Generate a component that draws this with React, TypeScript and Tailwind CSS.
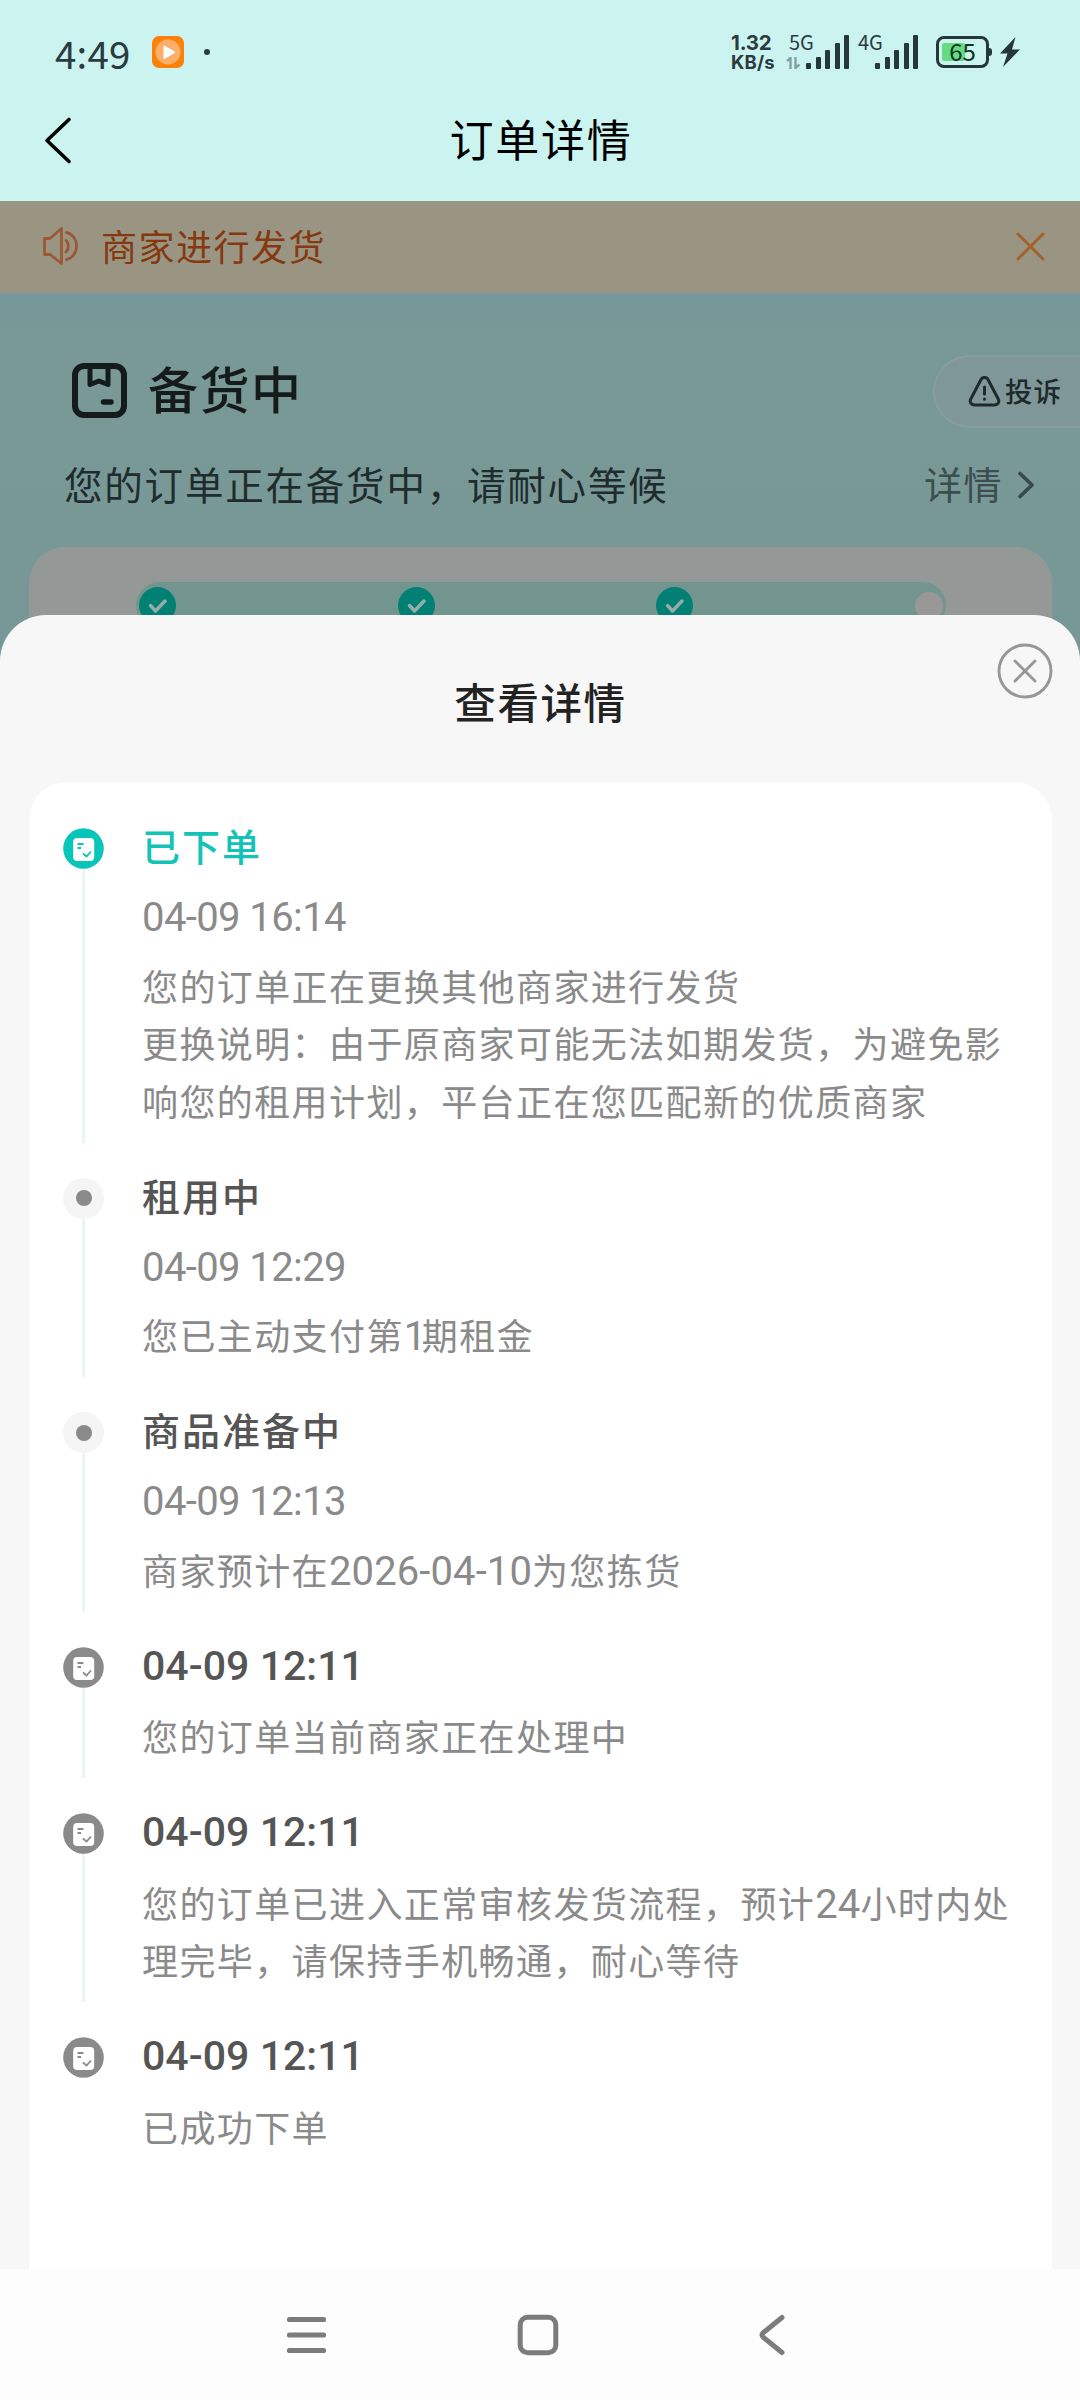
import type { ReactNode } from 'react';

type NodeKind = 'active' | 'dot' | 'done';

interface TimelineEntry {
  kind: NodeKind;
  title: string;
  time?: string;
  lines: string[];
}

const entries: TimelineEntry[] = [
  {
    kind: 'active',
    title: '已下单',
    time: '04-09 16:14',
    lines: [
      '您的订单正在更换其他商家进行发货',
      '更换说明：由于原商家可能无法如期发货，为避免影',
      '响您的租用计划，平台正在您匹配新的优质商家',
    ],
  },
  { kind: 'dot', title: '租用中', time: '04-09 12:29', lines: ['您已主动支付第1期租金'] },
  { kind: 'dot', title: '商品准备中', time: '04-09 12:13', lines: ['商家预计在2026-04-10为您拣货'] },
  { kind: 'done', title: '04-09 12:11', lines: ['您的订单当前商家正在处理中'] },
  {
    kind: 'done',
    title: '04-09 12:11',
    lines: ['您的订单已进入正常审核发货流程，预计24小时内处', '理完毕，请保持手机畅通，耐心等待'],
  },
  { kind: 'done', title: '04-09 12:11', lines: ['已成功下单'] },
];

function SignalBars() {
  return (
    <div className="flex h-[34px] items-end gap-[4.7px]">
      <span className="h-1.5 w-[4.8px] rounded-[1px] bg-[#26373a]" />
      <span className="h-3 w-[4.8px] rounded-[1px] bg-[#26373a]" />
      <span className="h-[19px] w-[4.8px] rounded-[1px] bg-[#26373a]" />
      <span className="h-[26px] w-[4.8px] rounded-[1px] bg-[#26373a]" />
      <span className="h-[34px] w-[4.8px] rounded-[1px] bg-[#26373a]" />
    </div>
  );
}

function StatusBar() {
  return (
    <div className="flex h-[104px] items-center pr-[60px] pl-[55px] text-[#2b3b3f]">
      <span className="w-[97px] font-['Noto_Sans_CJK_SC',sans-serif] text-[38.500px] leading-none tracking-[0.200px]">4:49</span>
      <svg width="32" height="32" viewBox="0 0 32 32">
        <rect width="32" height="32" rx="7" fill="#fb8207" />
        <circle cx="16" cy="16" r="12.5" fill="#fdae6b" />
        <path d="M11.5 10.5v11.5a.8.8 0 0 0 1.2.7l10-5.8a.8.8 0 0 0 0-1.4l-10-5.7a.8.8 0 0 0-1.2.7z" fill="#fff" />
      </svg>
      <span className="ml-5 size-1.5 rounded-full bg-[#2b3b3f]" />

      <div className="ml-auto flex items-center">
        <div className="mr-[7px] w-[48px] font-['Inter',sans-serif] font-bold whitespace-nowrap">
          <div className="text-[20.500px] leading-[20px] tracking-[-0.200px]">1.32</div>
          <div className="text-[18.500px] leading-[19px] tracking-[0.200px]">KB/s</div>
        </div>
        <div className="relative mr-[8px] flex h-[34px] w-[63px] justify-end">
          <span className="absolute -top-[3px] left-[3px] font-['Noto_Sans_CJK_SC',sans-serif] text-[20px] leading-5">5G</span>
          <svg className="absolute bottom-0 left-0" width="15" height="12" viewBox="0 0 15 12" fill="none" stroke="#84a2a2" strokeWidth="2.4">
            <path d="M1 4l3.5-3v11M9.500 0v11l4-3.500" />
          </svg>
          <SignalBars />
        </div>
        <div className="relative mr-[18px] flex h-[34px] w-[61px] justify-end">
          <span className="absolute -top-[3px] left-px font-['Noto_Sans_CJK_SC',sans-serif] text-[20px] leading-5">4G</span>
          <SignalBars />
        </div>
        <div className="relative flex h-8 w-[53px] items-center justify-center rounded-[8px] border-[3.5px] border-[#26373a]">
          <span className="absolute top-[3.5px] left-[3px] h-[18px] w-[23px] rounded-[2px] bg-[#65dc83]" />
          <span className="absolute top-[9px] -right-[6px] h-2 w-[3px] rounded-r bg-[#26373a]" />
          <span className="relative -mt-0.5 font-['Noto_Sans_CJK_SC',sans-serif] text-[24px] leading-none text-[#143421]">65</span>
        </div>
        <svg className="ml-[11px]" width="20" height="30" viewBox="0 0 20 30">
          <path d="M15.500 0L0 16.500h7.500L3 30L20 12.500h-8z" fill="#26373a" />
        </svg>
      </div>
    </div>
  );
}

function NavHeader() {
  return (
    <div className="flex h-[97px] items-start px-[43px]">
      <svg className="mt-[12px]" width="30" height="49" viewBox="0 0 30 49" fill="none" stroke="#000" strokeWidth="3.6" strokeLinecap="round" strokeLinejoin="round">
        <path d="M26 3.500L4 24.500L26 45.500" />
      </svg>
      <h1 className="mr-[28px] flex-1 text-center text-[44px] leading-[68px] tracking-[1.8px] text-black">订单详情</h1>
    </div>
  );
}

function NoticeBar() {
  return (
    <div className="flex h-[92px] items-center bg-[#9a9583] pr-[35px] pb-0.5 pl-[42px]">
      <svg width="37" height="38" viewBox="0 0 37 38" fill="none" stroke="#9c5835" strokeWidth="2.8" strokeLinejoin="round" strokeLinecap="round">
        <path d="M2.500 11.500H8L19.500 1.500V36.500L8 27.500H2.500z" />
        <path d="M24 13.500c3 2.500 3 9 0 11.500M24.500 5.500c5.500 1 10 6.500 10 13.500s-4.500 12.500-10 13.500" />
      </svg>
      <span className="-mt-0.5 ml-[22px] text-[36px] leading-[50px] tracking-[1.5px] text-[#84390f]">商家进行发货</span>
      <svg className="ml-auto" width="29" height="29" viewBox="0 0 29 29" fill="none" stroke="#a2622c" strokeWidth="3" strokeLinecap="round">
        <path d="M2 2l25 25M27 2L2 27" />
      </svg>
    </div>
  );
}

function StepCheck() {
  return (
    <svg width="37" height="37" viewBox="0 0 37 37" fill="none">
      <circle cx="18.500" cy="18.500" r="18.500" fill="#028074" />
      <path d="M11.500 18.500l5 5.500L26 14" stroke="#93aeaa" strokeWidth="3.500" strokeLinecap="round" strokeLinejoin="round" />
    </svg>
  );
}

function OrderSummary() {
  return (
    <section className="h-[420px] overflow-hidden bg-[#779997] bg-linear-to-b from-[#76979b] via-[#789996] via-10% to-[#779896]">
      <div className="mt-[62px] flex h-[73px] items-center pl-[72px]">
        <svg className="-mt-[3px]" width="55" height="55" viewBox="0 0 55 55" fill="none" stroke="#151b1b" strokeLinejoin="round" strokeLinecap="round">
          <rect x="3" y="3" width="49" height="49" rx="9" strokeWidth="6" />
          <path d="M18 4v17.500l9-3.500l9 3.500V4" strokeWidth="5" />
          <path d="M31.500 39h7.500" strokeWidth="5.500" />
        </svg>
        <h2 className="-mt-[9px] ml-[21px] text-[50px] leading-[72px] font-medium tracking-[1.5px] text-[#151a1a]">备货中</h2>
        <button className="ml-auto flex h-[73px] w-[147px] shrink-0 items-center rounded-l-full border-2 border-r-0 border-[#869e9d] bg-[#80979a] pl-[33px] text-[#1e2a2b]">
          <svg className="shrink-0" width="33" height="31" viewBox="0 0 33 31" fill="none" stroke="currentColor" strokeWidth="3" strokeLinecap="round" strokeLinejoin="round">
            <path d="M13 3.500a4 4 0 0 1 7 0L30.500 23.500a4 4 0 0 1-3.500 5.500H6a4 4 0 0 1-3.500-5.500z" />
            <path d="M16.500 11v7M16.500 23v.200" />
          </svg>
          <span className="-mt-[3px] ml-1 text-[27.500px] leading-10 font-medium tracking-[1px] whitespace-nowrap">投诉</span>
        </button>
      </div>
      <div className="mt-[28px] flex h-[56px] items-center pr-[45px] pl-[64px]">
        <p className="-mt-0.5 text-[38.500px] leading-[56px] tracking-[1.800px] text-[#1f2b2c]">您的订单正在备货中，请耐心等候</p>
        <span className="-mt-0.5 ml-auto text-[38px] leading-[56px] tracking-[1.500px] text-[#3d4d4f]">详情</span>
        <svg className="mt-0.5 ml-[14px]" width="18" height="30" viewBox="0 0 18 30" fill="none" stroke="#3a494b" strokeWidth="3.800" strokeLinecap="round" strokeLinejoin="round">
          <path d="M3 3.500L15 15L3 26.500" />
        </svg>
      </div>
      <div className="mr-[28px] ml-[29px] mt-[35px] h-[200px] rounded-t-[36px] bg-[#949998] pt-[35px]">
        <div className="mr-[106px] ml-[107px] flex h-[47px] items-center justify-between rounded-full bg-[#73958f] pr-[3px] pl-[3px]">
          <StepCheck />
          <StepCheck />
          <StepCheck />
          <span className="size-7 rounded-full bg-[#999797]" />
        </div>
      </div>
    </section>
  );
}

function NodeIcon({ kind }: { kind: NodeKind }) {
  if (kind === 'dot') {
    return (
      <span className="flex size-[41px] items-center justify-center rounded-full bg-[#f5f5f5]">
        <span className="size-4 rounded-full bg-[#8a8a8a]" />
      </span>
    );
  }
  const color = kind === 'active' ? '#08c5b9' : '#8a8a8a';
  return (
    <svg width="41" height="41" viewBox="0 0 41 41" fill="none">
      <circle cx="20.500" cy="20.500" r="20.300" fill={color} />
      <rect x="10.200" y="10" width="21" height="23" rx="4" fill="#fff" />
      <path d="M14.500 16h6M14.500 20h3.500" stroke={color} strokeWidth="1.800" />
      <path d="M20 25.500l3.500 3l4.500-5" stroke={color} strokeWidth="1.800" />
    </svg>
  );
}

// Numerals are set in a taller latin face than the surrounding text
function DetailLine({ text }: { text: string }) {
  return (
    <p className="h-[57.500px] text-[36px] leading-[54px] tracking-[1.400px] whitespace-nowrap text-[#8a8a8a]">
      {text.split(/(\d[\d-]*)/).map((part, i) => {
        if (!/^\d/.test(part)) return part;
        return (
          <span
            key={i}
            className={
              part.length === 1
                ? "font-['Roboto',sans-serif] text-[40px] leading-none tracking-[-4.500px]"
                : "font-['Roboto',sans-serif] text-[40px] leading-none tracking-[0.100px]"
            }
          >
            {part}
          </span>
        );
      })}
    </p>
  );
}

function TimelineItem({ entry, last }: { entry: TimelineEntry; last: boolean }) {
  const timeAsTitle = !entry.time;
  return (
    <li className="mb-[35px] flex">
      <div className="flex w-[41px] shrink-0 flex-col items-center">
        <NodeIcon kind={entry.kind} />
        {!last && <span className="w-[3px] flex-1 bg-[#eaf5f4]" />}
      </div>
      <div className="ml-[38px] pb-[12.500px]">
        <h3
          className={
            timeAsTitle
              ? "h-[40px] font-['Roboto',sans-serif] text-[41px] leading-[39px] font-medium tracking-[0.050px] text-[#555]"
              : entry.kind === 'active'
                ? 'h-[40px] text-[38px] leading-[34px] font-medium tracking-[2px] text-[#12c3b6]'
                : 'h-[40px] text-[38px] leading-[34px] font-medium tracking-[2px] text-[#555]'
          }
        >
          {entry.title}
        </h3>
        {entry.time && (
          <p className="mt-[21px] h-[57px] font-['Roboto',sans-serif] text-[40px] leading-[58px] tracking-[-0.600px] text-[#8a8a8a]">
            {entry.time}
          </p>
        )}
        <div className={entry.time ? 'mt-[11.500px]' : 'mt-[21.500px]'}>
          {entry.lines.map((line) => (
            <DetailLine key={line} text={line} />
          ))}
        </div>
      </div>
    </li>
  );
}

function DetailSheet({ children }: { children: ReactNode }) {
  return (
    <div className="relative z-10 -mt-[98px] flex h-[1654px] flex-col rounded-t-[46px] bg-[#f7f7f7] pr-[28px] pl-[29px]">
      <h2 className="pt-[56px] text-center text-[41.500px] leading-[60px] font-medium tracking-[1.600px] text-[#222]">查看详情</h2>
      <button className="absolute top-[28px] right-[27px]">
        <svg width="56" height="56" viewBox="0 0 56 56" fill="none" stroke="#979797" strokeLinecap="round">
          <circle cx="28" cy="28" r="26" strokeWidth="2.900" />
          <path d="M18 18l20 20M38 18L18 38" strokeWidth="2.900" />
        </svg>
      </button>
      <div className="mt-[51px] flex-1 rounded-t-[38px] bg-white pt-[46px] pl-[34px]">{children}</div>
    </div>
  );
}

function SystemNav() {
  return (
    <nav className="flex h-[131px] items-center justify-between bg-[#fdfdfd] pr-[294px] pl-[285px]">
      <svg width="42" height="42" viewBox="0 0 42 42" stroke="#7c7c7c" strokeWidth="5.200" strokeLinecap="round">
        <path d="M4.500 5.500h34M4.500 21h34M4.500 36.500h34" />
      </svg>
      <svg className="-ml-[9px]" width="42" height="42" viewBox="0 0 42 42" fill="none" stroke="#7c7c7c" strokeWidth="5">
        <rect x="3.200" y="3.200" width="35.600" height="35.600" rx="7.500" />
      </svg>
      <svg width="28" height="42" viewBox="0 0 28 42" fill="none" stroke="#7c7c7c" strokeWidth="5" strokeLinecap="round">
        <path d="M24 3.500L5.500 18.500q-3 2.500 0 5L24 38.500" />
      </svg>
    </nav>
  );
}

function App() {
  return (
    <div className="h-[2400px] w-[1080px] overflow-hidden bg-white font-['Noto_Sans_CJK_SC',sans-serif]">
      <header className="bg-[#cbf4f1]">
        <StatusBar />
        <NavHeader />
      </header>
      <NoticeBar />
      <OrderSummary />
      <DetailSheet>
        <ul>
          {entries.map((entry, i) => (
            <TimelineItem key={i} entry={entry} last={i === entries.length - 1} />
          ))}
        </ul>
      </DetailSheet>
      <SystemNav />
    </div>
  );
}

export default App;
